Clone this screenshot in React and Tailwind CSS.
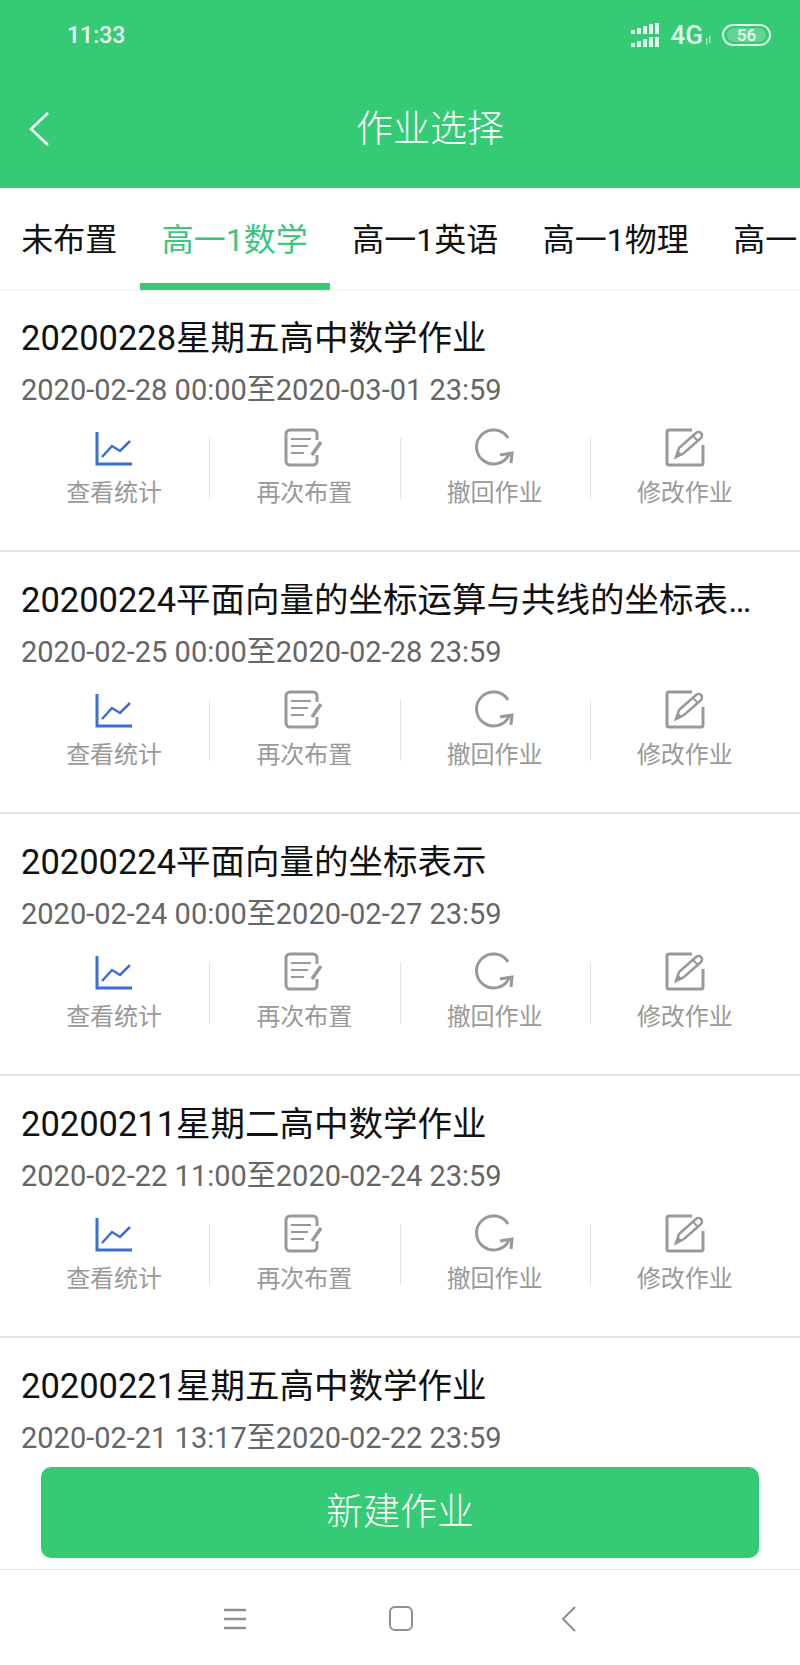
import React from 'react'

const font = { fontFamily: '"Roboto", "Noto Sans CJK SC", sans-serif' }

const tabs = ['未布置', '高一1数学', '高一1英语', '高一1物理', '高一']

const items = [
  { title: '20200228星期五高中数学作业', date: '2020-02-28 00:00至2020-03-01 23:59', actions: true },
  { title: '20200224平面向量的坐标运算与共线的坐标表示', date: '2020-02-25 00:00至2020-02-28 23:59', actions: true },
  { title: '20200224平面向量的坐标表示', date: '2020-02-24 00:00至2020-02-27 23:59', actions: true },
  { title: '20200211星期二高中数学作业', date: '2020-02-22 11:00至2020-02-24 23:59', actions: true },
  // last card is scrolled under the button, its actions are out of view
  { title: '20200221星期五高中数学作业', date: '2020-02-21 13:17至2020-02-22 23:59', actions: false },
]

function ChartIcon() {
  return (
    <svg width="40" height="40" viewBox="0 0 40 40" fill="none" stroke="#3b6fd4">
      <path d="M3 4V36H38" strokeWidth="3" />
      <path d="M8 29L18 18L26 23L36 13" strokeWidth="2.5" />
    </svg>
  )
}

function NoteIcon() {
  return (
    <svg width="40" height="40" viewBox="0 0 40 40" fill="none" stroke="#999">
      <path d="M33 12V6a4 4 0 0 0-4-4H6a4 4 0 0 0-4 4V33a4 4 0 0 0 4 4H29a4 4 0 0 0 4-4V27" strokeWidth="3" />
      <path d="M7 11H27M7 18H24M7 25H20" strokeWidth="2" />
      <path d="M37 14L28 27" strokeWidth="3.5" />
    </svg>
  )
}

function RedoIcon() {
  return (
    <svg width="40" height="40" viewBox="0 0 40 40" fill="none" stroke="#999" strokeWidth="3">
      <path d="M33 10A17 17 0 1 0 34 26" />
      <path d="M25 27L37 25L36 35" />
    </svg>
  )
}

function EditIcon() {
  return (
    <svg width="40" height="40" viewBox="0 0 40 40" fill="none" stroke="#999" strokeWidth="3">
      <path d="M27 2H4a2 2 0 0 0-2 2V35a2 2 0 0 0 2 2H36a2 2 0 0 0 2-2V17" />
      <path d="M11 29L14 20L31 5a3 3 0 0 1 5 5L19 25Z" strokeWidth="2.5" />
      <path d="M28 8L33 13" strokeWidth="2" />
      <path d="M11 29L14 24L17 27Z" fill="#999" strokeWidth="1" />
    </svg>
  )
}

function Action({ icon, label }) {
  return (
    <div className="flex-1 flex flex-col items-center">
      {icon}
      <span className="mt-[9px] text-[24px] leading-[32px] text-[#999999]">{label}</span>
    </div>
  )
}

function Divider() {
  return <div className="w-px -mr-px h-[61px] bg-[#e2e2e2]" />
}

function Card({ item }) {
  return (
    <div className="h-[262px] shrink-0 border-b-2 border-[#e2e2e2] pt-[28px]">
      <div className="pl-[21px] pr-[42px] text-[34.5px] leading-[40px] text-[#111111] truncate">{item.title}</div>
      <div className="mt-[14px] px-[21px] text-[29px] leading-[36px] text-[#666666]">{item.date}</div>
      {item.actions && (
        <div className="mt-[20px] pl-[19px] pr-[20px] flex items-center">
          <Action icon={<ChartIcon />} label="查看统计" />
          <Divider />
          <Action icon={<NoteIcon />} label="再次布置" />
          <Divider />
          <Action icon={<RedoIcon />} label="撤回作业" />
          <Divider />
          <Action icon={<EditIcon />} label="修改作业" />
        </div>
      )}
    </div>
  )
}

function Signal() {
  const bars = [
    { x: 0, top: 7, low: 20 },
    { x: 6, top: 5, low: 18 },
    { x: 12, top: 3, low: 16 },
    { x: 18, top: 1, low: 14 },
    { x: 24, top: 0, low: 14 },
  ]
  return (
    <svg width="28" height="24" viewBox="0 0 28 24" fill="#e3f7ec">
      {bars.map(b => (
        <React.Fragment key={b.x}>
          <rect x={b.x} y={b.top} width="4" height={11 - b.top} />
          <rect x={b.x} y={b.low} width="4" height={24 - b.low} />
        </React.Fragment>
      ))}
    </svg>
  )
}

export default function App() {
  return (
    <div className="h-screen flex flex-col bg-white overflow-hidden" style={font}>
      <div className="h-[188px] shrink-0 bg-[#34cb74] text-white">
        <div className="h-[70px] flex items-center justify-between pl-[67px] pr-[29px]">
          <span className="text-[23px] font-medium leading-none text-[#eefbf3]">11:33</span>
          <div className="flex items-center">
            <Signal />
            <span className="ml-[12px] text-[26px] font-medium leading-none text-[#e6f8ee]">4G</span>
            <svg className="ml-[3px] mt-[10px]" width="5" height="9" viewBox="0 0 5 9" fill="#a5e6c1">
              <rect x="0" y="2" width="1.5" height="7" />
              <rect x="3" y="0" width="1.5" height="7" />
            </svg>
            <div className="ml-[11px] w-[49px] h-[22px] rounded-full border-2 border-[#dff5e8] flex items-center justify-center">
              <div className="w-[39px] h-[14px] rounded-full bg-[#62d594] flex items-center justify-center">
                <span className="text-[17px] font-medium leading-none text-[#eefbf3]">56</span>
              </div>
            </div>
          </div>
        </div>
        <div className="h-[118px] flex items-center">
          <div className="w-[60px] flex justify-end pr-[10px]">
            <svg width="22" height="34" viewBox="0 0 22 34" fill="none" stroke="white" strokeWidth="2.5">
              <path d="M20 1L3 17L20 33" />
            </svg>
          </div>
          <div className="flex-1 text-center text-[37px] font-light leading-none">作业选择</div>
        </div>
      </div>

      <div className="h-[103px] shrink-0 flex overflow-hidden border-b border-[#f2f2f2] -ml-px">
        {tabs.map((t, i) => (
          <div
            key={t}
            className={`shrink-0 px-[22.25px] pt-[32px] text-[32px] leading-[40px] whitespace-nowrap border-b-[7px] ${
              i === 1 ? 'text-[#3cc57f] border-[#34cb74]' : 'text-[#111111] border-transparent'
            }`}
          >
            {t}
          </div>
        ))}
      </div>

      <div className="flex-1 overflow-hidden flex flex-col -mt-px">
        {items.map((item, i) => (
          <Card key={i} item={item} />
        ))}
      </div>

      <div className="shrink-0 bg-white pt-[7px] pb-[11px] px-[41px]">
        <div className="h-[91px] rounded-[10px] bg-[#34cb74] flex items-center justify-center text-white text-[37px] font-light">
          新建作业
        </div>
      </div>

      <div className="h-[96px] shrink-0 border-t border-[#e8e8e8] flex items-center justify-center pt-[2px]">
        <svg width="22" height="22" viewBox="0 0 22 22" fill="none" stroke="#8f8f8f" strokeWidth="2.5">
          <path d="M0 2H22M0 11H22M0 20H22" />
        </svg>
        <div className="ml-[143px] w-[24px] h-[25px] rounded-[6px] border-2 border-[#8f8f8f]" />
        <svg className="ml-[148px]" width="16" height="26" viewBox="0 0 16 26" fill="none" stroke="#8f8f8f" strokeWidth="2">
          <path d="M14 1L2 13L14 25" />
        </svg>
      </div>
    </div>
  )
}
